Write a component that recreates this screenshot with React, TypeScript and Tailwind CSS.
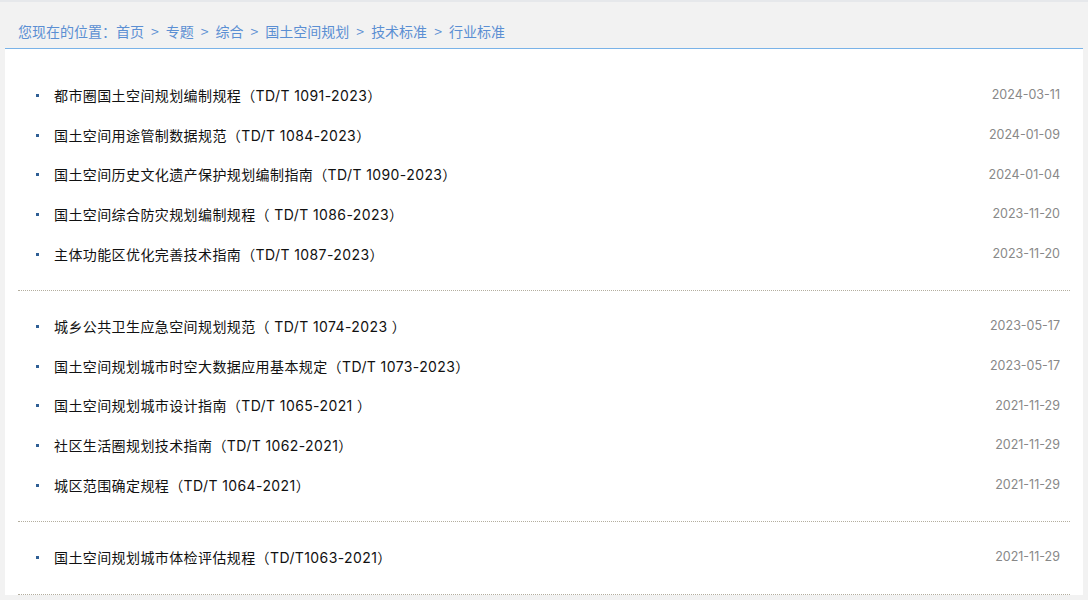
const groups = [
  [
    { title: '都市圈国土空间规划编制规程（TD/T 1091-2023）', date: '2024-03-11' },
    { title: '国土空间用途管制数据规范（TD/T 1084-2023）', date: '2024-01-09' },
    { title: '国土空间历史文化遗产保护规划编制指南（TD/T 1090-2023）', date: '2024-01-04' },
    { title: '国土空间综合防灾规划编制规程（ TD/T 1086-2023）', date: '2023-11-20' },
    { title: '主体功能区优化完善技术指南（TD/T 1087-2023）', date: '2023-11-20' },
  ],
  [
    { title: '城乡公共卫生应急空间规划规范（ TD/T 1074-2023 ）', date: '2023-05-17' },
    { title: '国土空间规划城市时空大数据应用基本规定（TD/T 1073-2023）', date: '2023-05-17' },
    { title: '国土空间规划城市设计指南（TD/T 1065-2021 ）', date: '2021-11-29' },
    { title: '社区生活圈规划技术指南（TD/T 1062-2021）', date: '2021-11-29' },
    { title: '城区范围确定规程（TD/T 1064-2021）', date: '2021-11-29' },
  ],
  [{ title: '国土空间规划城市体检评估规程（TD/T1063-2021）', date: '2021-11-29' }],
];

const crumbs = ['首页', '专题', '综合', '国土空间规划', '技术标准', '行业标准'];

export default function App() {
  return (
    <div className="min-h-[600px] bg-[#f2f2f2] font-['Inter','Noto_Sans_CJK_SC',sans-serif] text-[14px]">
      {/* breadcrumb */}
      <div className="h-[48px] px-[18px] pt-[19px] leading-5 text-[#5b8fd3] border-t-2 border-[#e6e8eb] font-['Noto_Sans_CJK_SC',sans-serif]">
        您现在的位置：
        {crumbs.map((c, i) => (
          <span key={c}>
            {i > 0 && <span className="mx-[7px]">&gt;</span>}
            {c}
          </span>
        ))}
      </div>

      {/* list panel */}
      <div className="mx-[5px] bg-white border-t border-[#7ab3e8] px-[13px] pt-[11px]">
        {groups.map((g, gi) => (
          <ul key={gi} className="py-4 border-b border-dotted border-[#b3ae9f]">
            {g.map((item) => (
              <li key={item.title} className="flex items-center h-[39.6px] pl-[18px] pr-[10px]">
                <span className="w-[3px] h-[3px] bg-[#2f5f95] mr-[15px] shrink-0" />
                <span className="flex-1 text-[#111] tracking-[0.4px]">{item.title}</span>
                <span className="text-[12.5px] text-[#888]">{item.date}</span>
              </li>
            ))}
          </ul>
        ))}
      </div>
    </div>
  );
}
